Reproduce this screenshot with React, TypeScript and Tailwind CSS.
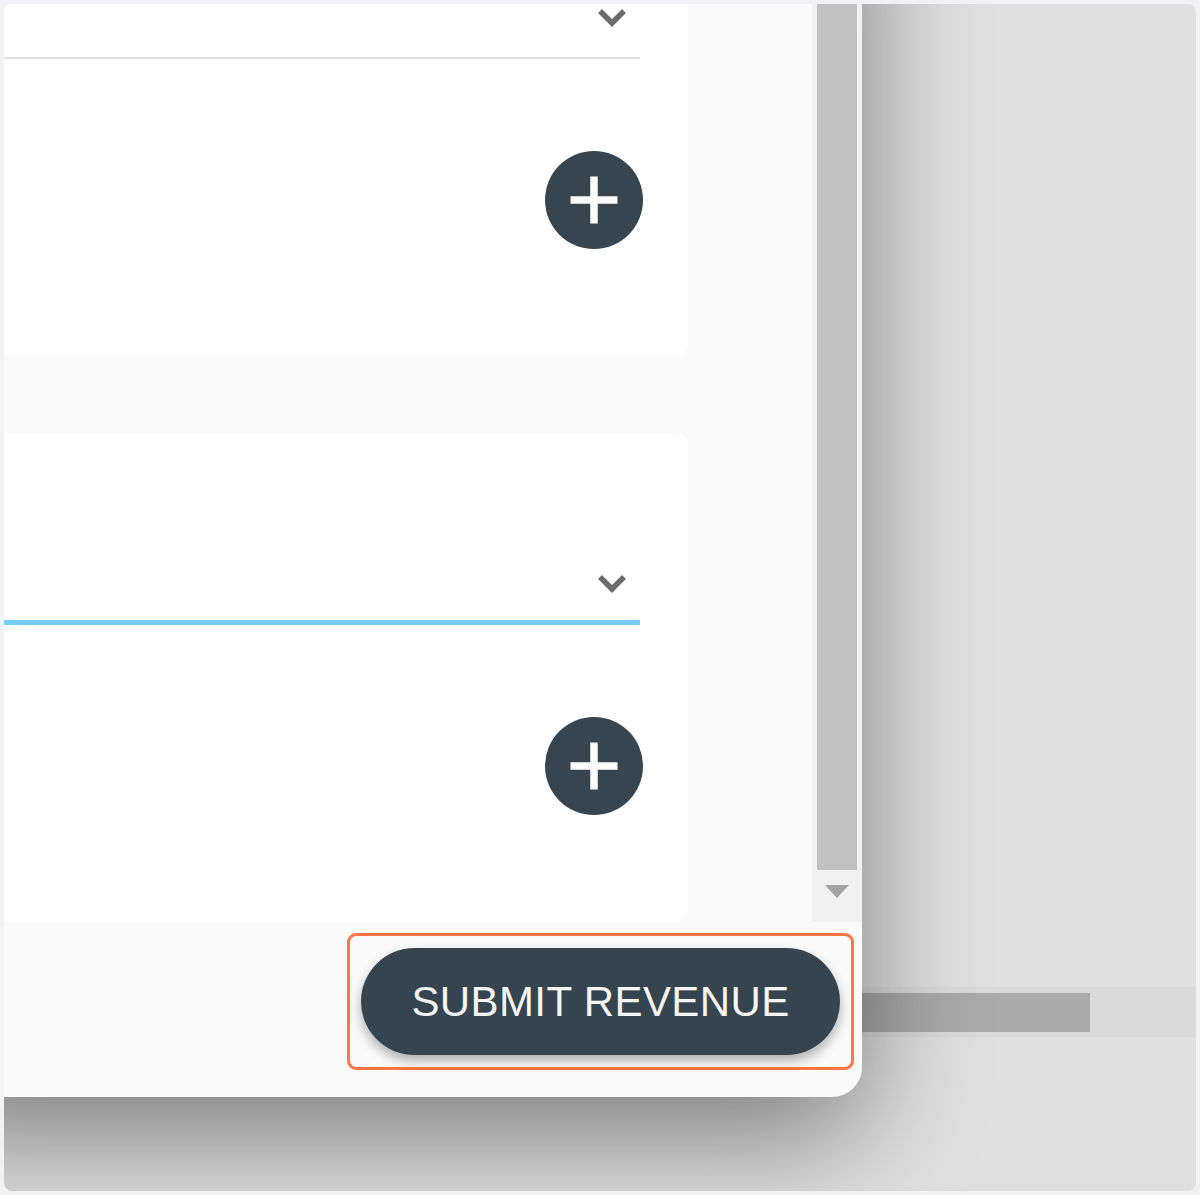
import React from "react";

function Chevron() {
  return (
    <svg width="32" height="21" viewBox="0 0 32 21" aria-hidden="true">
      <polyline
        points="4,4 16,16 28,4"
        fill="none"
        stroke="#6b6b6b"
        strokeWidth="5.5"
        strokeLinecap="butt"
        strokeLinejoin="miter"
      />
    </svg>
  );
}

function PlusButton() {
  return (
    <button className="w-[98px] h-[98px] rounded-full bg-[#36454f] flex items-center justify-center">
      <svg width="48" height="48" viewBox="0 0 48 48" aria-hidden="true">
        <line x1="0.5" y1="24" x2="47.5" y2="24" stroke="#ffffff" strokeWidth="7.5" />
        <line x1="24" y1="0.5" x2="24" y2="47.5" stroke="#ffffff" strokeWidth="7.5" />
      </svg>
    </button>
  );
}

function Card({ focused }: { focused: boolean }) {
  return (
    <div className="w-[784px] h-[489px] shrink-0 bg-white rounded-[12px] flex flex-col">
      <div
        className={
          focused
            ? "w-[736px] h-[192px] border-b-[5px] border-[#78cdf8] flex items-end justify-end pr-[12px] pb-[26px]"
            : "w-[736px] h-[192px] border-b-[2px] border-[#e0e0e0] flex items-end justify-end pr-[12px] pb-[29px]"
        }
      >
        <Chevron />
      </div>
      <div className="mt-[92px] flex justify-end pr-[45px]">
        <PlusButton />
      </div>
    </div>
  );
}

export default function App() {
  return (
    <div className="w-[1200px] h-[1195px] bg-[#f2f1f6] p-[4px] font-['Liberation_Sans',Arial,sans-serif]">
      <div className="relative w-full h-full rounded-[8px] overflow-hidden bg-[#e0e0e0]">
        {/* page content under the modal */}
        <div className="flex flex-col pt-[983px]">
          <div className="h-[50px] bg-[#dadada] pt-[6px]">
            <div className="w-[1086px] h-[39px] bg-[#aaaaaa]" />
          </div>
        </div>

        {/* modal dialog */}
        <div className="absolute left-[-100px] top-[-137px] w-[958px] h-[1230px] bg-[#fafafa] rounded-br-[30px] overflow-hidden shadow-[0_40px_120px_rgba(0,0,0,0.45)] flex flex-col">
          <div className="h-[1055px] flex">
            <div className="w-[908px] flex flex-col gap-[77px] overflow-hidden">
              <Card focused={false} />
              <Card focused={true} />
            </div>
            <div className="w-[50px] bg-[#f1f1f1] flex flex-col">
              <div className="ml-[5px] w-[40px] h-[1003px] bg-[#c1c1c1]" />
              <div className="mt-[15px] flex justify-center">
                <svg width="24" height="13" viewBox="0 0 24 13" aria-hidden="true">
                  <polygon points="0,0 24,0 12,13" fill="#a3a3a3" />
                </svg>
              </div>
            </div>
          </div>
          <div className="h-[175px] flex justify-end items-start pt-[11px] pr-[8px]">
            <div className="border-[3px] border-[#ff7644] rounded-[9px] px-[11px] py-[12px]">
              <button className="w-[479px] h-[107px] rounded-full bg-[#35444e] text-[#f5f5f5] text-[42px] leading-none tracking-[0.4px] shadow-[0_6px_12px_rgba(0,0,0,0.3)] flex items-center justify-center">
                SUBMIT REVENUE
              </button>
            </div>
          </div>
        </div>
      </div>
    </div>
  );
}
